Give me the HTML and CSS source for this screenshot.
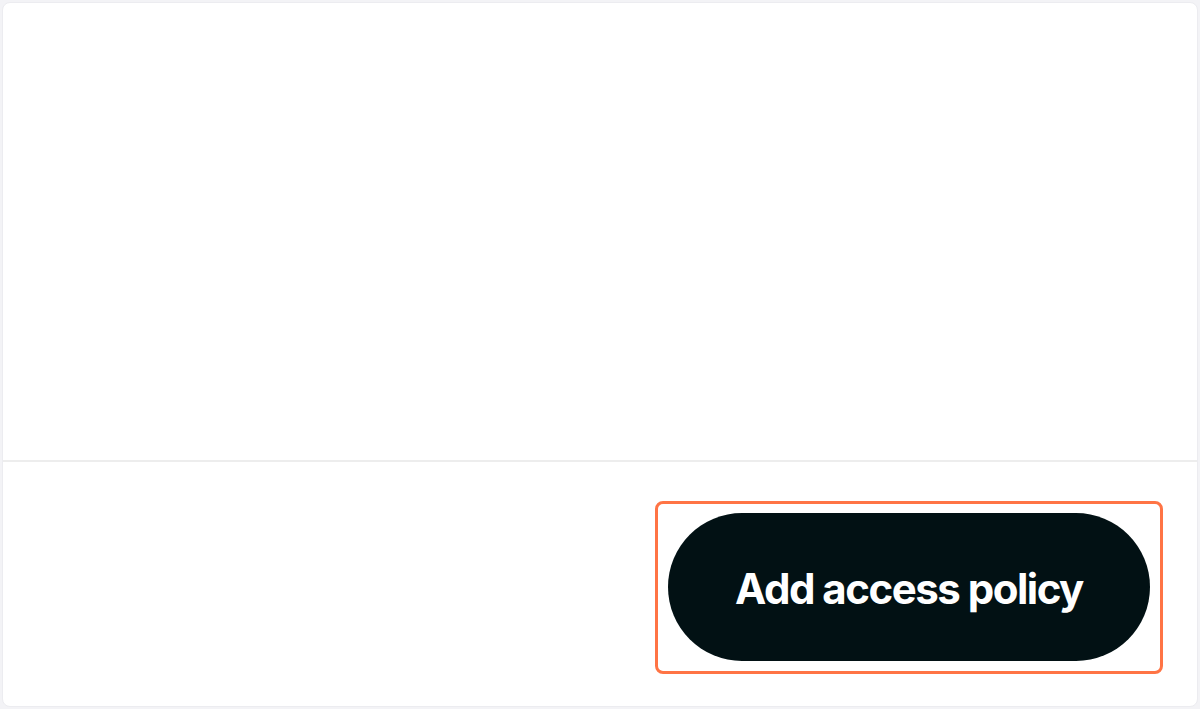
FILE: index.html
```html
<!DOCTYPE html>
<html lang="en">
<head>
  <meta charset="UTF-8">
  <meta name="viewport" content="width=device-width, initial-scale=1">
  <title>Access policy</title>
  <link rel="stylesheet" href="styles.css">
</head>
<body>

  <!-- Dialog card -->
  <div class="card">
    <div class="card-body"></div>

    <!-- Footer actions -->
    <div class="card-footer">
      <div class="highlight">
        <button class="btn-primary" type="button">Add access policy</button>
      </div>
    </div>
  </div>

</body>
</html>
```

FILE: styles.css
```css
body {
  margin: 0;
  background: #f3f3f6;
  font-family: 'Inter', 'Liberation Sans', sans-serif;
}

.card {
  margin: 2px;
  height: 705px;
  background: #fff;
  border: 1px solid #ececf0;
  border-radius: 8px;
  box-sizing: border-box;
  display: flex;
  flex-direction: column;
}

.card-body {
  flex: 1;
}

.card-footer {
  height: 246px;
  border-top: 2px solid #ededed;
  box-sizing: border-box;
  display: flex;
  justify-content: flex-end;
  align-items: flex-start;
  padding: 39px 34px 0 0;
}

.highlight {
  border: 3px solid #ff7445;
  border-radius: 8px;
  padding: 9px 10px 10px;
}

.btn-primary {
  display: block;
  width: 482px;
  height: 148px;
  background: #021114;
  color: #fff;
  border: none;
  border-radius: 74px;
  font-family: 'Inter', sans-serif;
  font-weight: 700;
  font-size: 42px;
  letter-spacing: -1.5px;
  padding: 2px 0 0;
  cursor: pointer;
}
```
